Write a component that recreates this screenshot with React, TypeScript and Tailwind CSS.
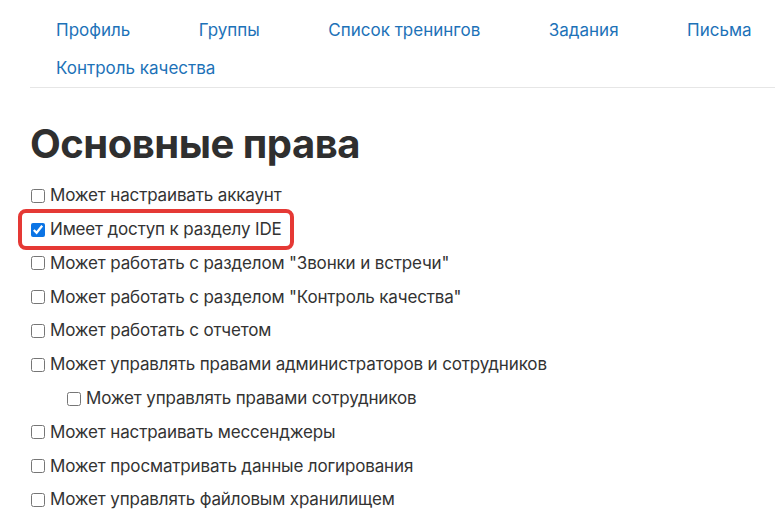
import React from "react";

const links = ["Профиль", "Группы", "Список тренингов", "Задания", "Письма", "Контроль качества"];

const items: { label: string; checked?: boolean; nested?: boolean; hl?: boolean }[] = [
  { label: "Может настраивать аккаунт" },
  { label: "Имеет доступ к разделу IDE", checked: true, hl: true },
  { label: 'Может работать с разделом "Звонки и встречи"' },
  { label: 'Может работать с разделом "Контроль качества"' },
  { label: "Может работать с отчетом" },
  { label: "Может управлять правами администраторов и сотрудников" },
  { label: "Может управлять правами сотрудников", nested: true },
  { label: "Может настраивать мессенджеры" },
  { label: "Может просматривать данные логирования" },
  { label: "Может управлять файловым хранилищем" },
];

export default function App() {
  return (
    <div
      className="w-[775px] h-[518px] overflow-hidden bg-white text-[#333]"
      style={{ fontFamily: "Inter, 'Noto Sans', sans-serif" }}
    >
      <div className="pl-[30px]">
        <div className="h-[11px]" />
        <nav className="flex flex-wrap gap-x-[68.5px] pl-[26px] border-b border-[#e6e6e6] pb-0">
          {links.map((l) => (
            <a key={l} className="h-[38px] leading-[38px] text-[17px] text-[#1d72b8]">
              {l}
            </a>
          ))}
        </nav>
        <h1 className="mt-[32px] text-[40px] leading-[48px] font-bold text-[#2f2f2f] tracking-[-0.5px]">Основные права</h1>
        <div className="mt-[11px] flex flex-col">
          {items.map((it) => (
            <div key={it.label} className={`h-[33.8px] flex items-center ${it.nested ? "pl-[36px]" : ""}`}>
              <label
                className={`flex items-center ${
                  it.hl ? "-ml-[12px] pl-[8px] pr-[8px] h-[41px] border-[4px] border-[#e53935] rounded-[8px]" : ""
                }`}
              >
                <input
                  type="checkbox"
                  defaultChecked={it.checked}
                  className="w-[14px] h-[14px] m-0 mr-[5px] ml-[1px] accent-[#0b74e5]"
                />
                <span className="text-[17px] text-[#333] tracking-[-0.15px]">{it.label}</span>
              </label>
            </div>
          ))}
        </div>
      </div>
    </div>
  );
}
